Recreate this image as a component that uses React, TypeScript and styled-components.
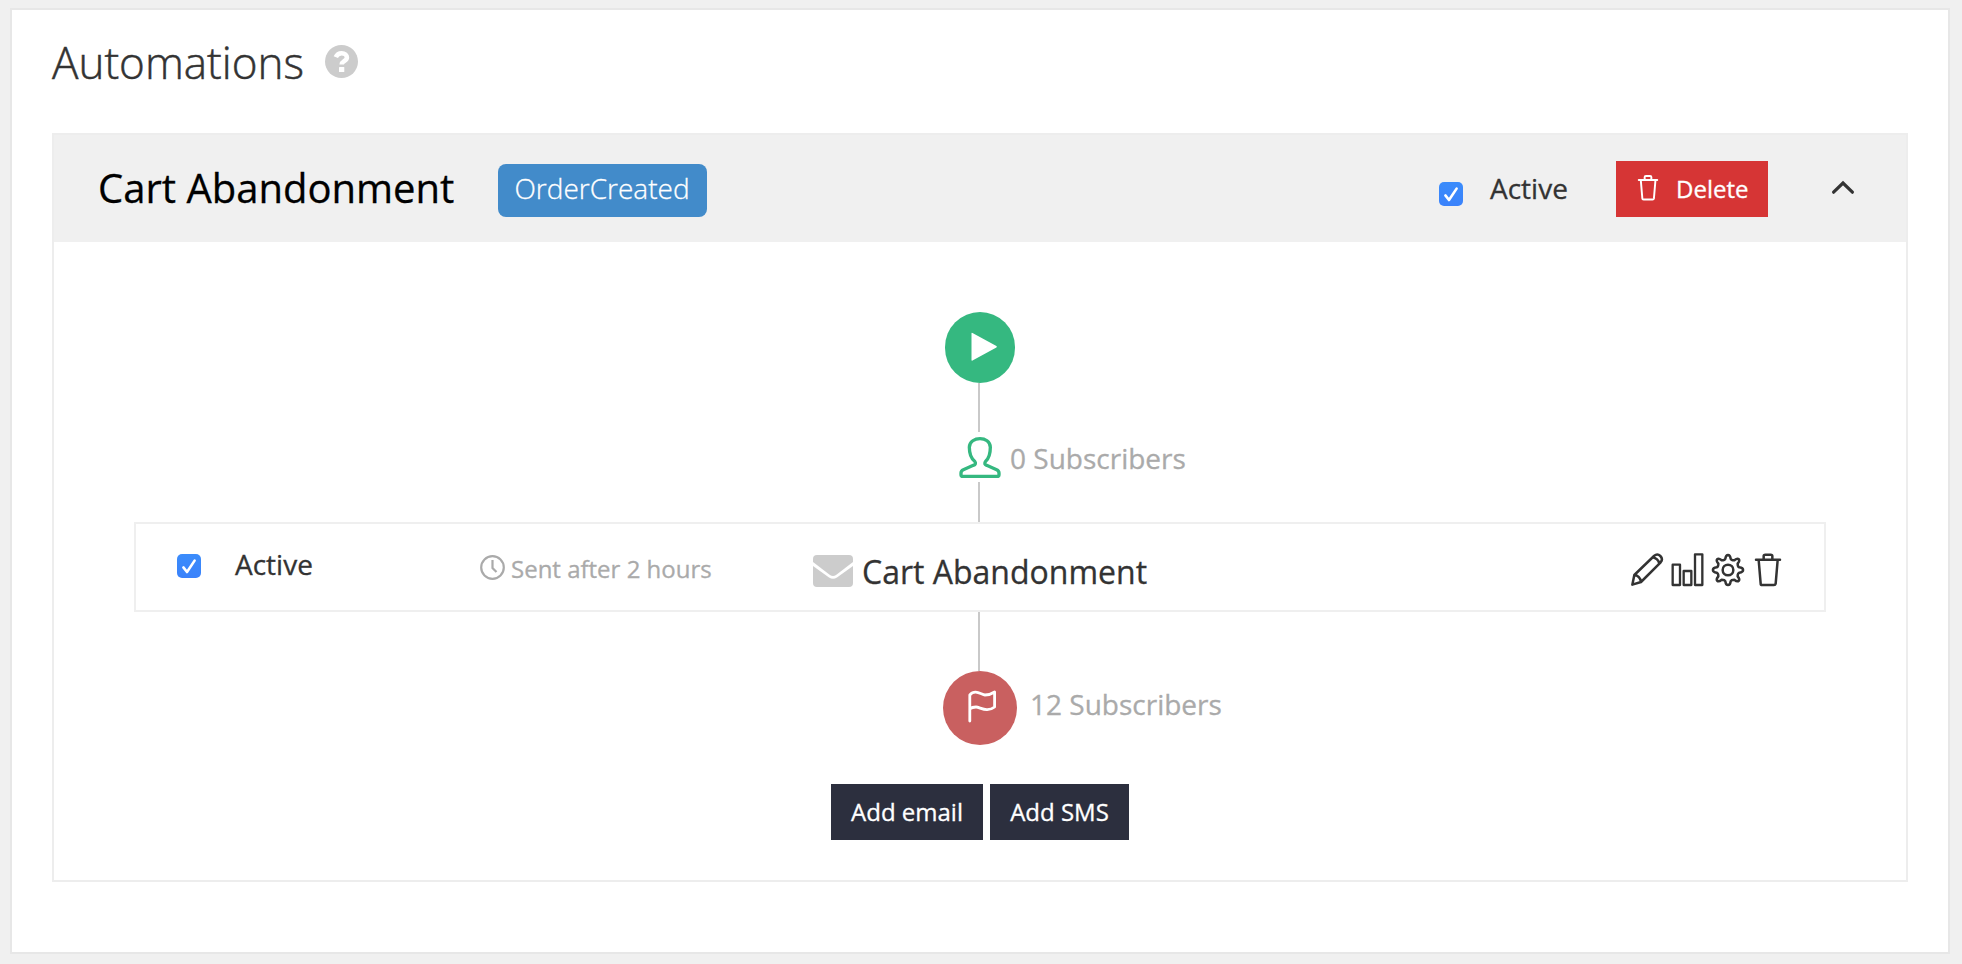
import React, { useState } from "react";
import styled, { createGlobalStyle } from "styled-components";

const GlobalStyle = createGlobalStyle`
  * { box-sizing: border-box; }
  body {
    margin: 0;
    background: #f0f0f0;
    color: #333;
    font-family: "Open Sans", "Noto Sans", sans-serif;
    -webkit-text-stroke: 0.3px currentColor;
  }
  svg { display: block; flex: none; }
`;

const Page = styled.div`
  height: 964px;
  padding: 8px 12px 10px 10px;
  overflow: hidden;
`;

const Panel = styled.main`
  height: 946px;
  padding: 0 40px;
  background: #fff;
  border: 2px solid #e7e7e7;
`;

const Heading = styled.header`
  display: flex;
  height: 123px;
`;

const PageTitle = styled.h1`
  width: 273px;
  margin: 22px 0 0;
  font-size: 44px;
  font-weight: 300;
  line-height: 60px;
  white-space: nowrap;
  -webkit-text-stroke-width: 0.5px;
`;

const HelpIcon = styled.svg`
  margin-top: 35px;
`;

const Card = styled.section`
  height: 749px;
  border: 2px solid #ededed;
`;

const CardHeader = styled.div`
  display: flex;
  align-items: flex-start;
  height: 107px;
  padding: 0 51px 0 44px;
  background: #f0f0f0;
`;

const CardTitle = styled.h2`
  width: 400px;
  margin: 25px 0 0;
  color: #000;
  font-size: 40px;
  font-weight: 400;
  line-height: 56px;
  white-space: nowrap;
`;

const Badge = styled.span`
  width: 209px;
  height: 53px;
  margin-top: 29px;
  padding-right: 1px;
  border-radius: 8px;
  background: #428bca;
  color: #fff;
  font-size: 28px;
  font-weight: 300;
  line-height: 48px;
  text-align: center;
`;

const HeaderActions = styled.div`
  display: flex;
  align-items: flex-start;
  margin-left: auto;
`;

const Check = styled.button<{ $top: number }>`
  width: 24px;
  height: 24px;
  margin: ${(p) => p.$top}px 0 0;
  padding: 0;
  border: 0;
  border-radius: 5px;
  background: linear-gradient(#3b8cfb, #3a82fb);
`;

const Label = styled.span<{ $top: number; $left: number; $width: number }>`
  width: ${(p) => p.$width}px;
  margin: ${(p) => p.$top}px 0 0 ${(p) => p.$left}px;
  font-size: 28px;
  line-height: 38px;
  white-space: nowrap;
`;

const DeleteButton = styled.button`
  display: flex;
  width: 152px;
  height: 56px;
  margin-top: 26px;
  padding: 0 0 0 21px;
  border: 0;
  background: #d63535;
  color: #fff;
  font: 500 24px/56px "Open Sans", "Noto Sans", sans-serif;
  gap: 17px;

  svg { margin-top: 13px; }
`;

const Toggle = styled.button`
  margin: 44px 0 0 62px;
  padding: 0;
  border: 0;
  background: none;
`;

const Flow = styled.div`
  display: flex;
  flex-direction: column;
  align-items: center;
  padding-top: 70px;
`;

const Node = styled.div`
  display: grid;
  grid-template-columns: 1fr auto 1fr;
  width: 100%;
`;

const Circle = styled.div<{ $size: number; $color: string }>`
  grid-column: 2;
  width: ${(p) => p.$size}px;
  height: ${(p) => p.$size}px;
  border-radius: 50%;
  background: ${(p) => p.$color};
`;

const Person = styled.svg`
  grid-column: 2;
`;

const Count = styled.span<{ $top: number; $left: number }>`
  margin: ${(p) => p.$top}px 0 0 ${(p) => p.$left}px;
  color: #aaa;
  font-size: 28px;
  line-height: 38px;
  white-space: nowrap;
`;

const Connector = styled.div<{ $length: number; $after?: number }>`
  width: 2px;
  height: ${(p) => p.$length}px;
  margin: 0 2px ${(p) => p.$after ?? 0}px 0;
  background: #c9c9c9;
`;

const Step = styled.div`
  display: flex;
  align-items: flex-start;
  width: 1692px;
  height: 90px;
  padding: 0 42px 0 41px;
  border: 2px solid #efefef;
`;

const Delay = styled.div`
  display: flex;
  width: 333px;
  margin-top: 30px;
  gap: 6px;
  color: #aaa;
  font-size: 24px;
  line-height: 30px;
  white-space: nowrap;

  svg { margin-top: 1px; }
`;

const StepName = styled.div`
  display: flex;
  gap: 9px;
  margin-top: 31px;
  font-size: 32px;
  white-space: nowrap;

  span { margin-top: -5px; line-height: 44px; }
`;

const StepActions = styled.div`
  display: flex;
  margin: 28px 0 0 auto;
  gap: 7px;

  svg:last-child { margin-left: 2px; }
`;

const Buttons = styled.div`
  display: flex;
  gap: 7px;
  margin-top: 39px;
`;

const DarkButton = styled.button<{ $width: number }>`
  width: ${(p) => p.$width}px;
  height: 56px;
  padding: 0;
  border: 0;
  background: #2c2f3e;
  color: #fff;
  font: 500 24px/56px "Open Sans", "Noto Sans", sans-serif;
  white-space: nowrap;
`;

function Checkbox({ top }: { top: number }) {
  const [checked, setChecked] = useState(true);
  return (
    <Check
      $top={top}
      role="checkbox"
      aria-checked={checked}
      aria-label="Active"
      onClick={() => setChecked(!checked)}
    >
      {checked && (
        <svg width="24" height="24" viewBox="0 0 24 24" fill="none" stroke="#fff" strokeWidth="2.6" strokeLinecap="round" strokeLinejoin="round">
          <path d="M6.4 13.4 10 18 17.6 6.6" />
        </svg>
      )}
    </Check>
  );
}

function Trash({ width, height }: { width: number; height: number }) {
  return (
    <svg width={width} height={height} viewBox="462 126 84 105" fill="none" stroke="currentColor" strokeWidth="7.5" strokeLinecap="round" strokeLinejoin="round">
      <path d="M468 149H540M476 150 482 221Q482 225 487 225H522Q526 225 527 221L533 150M491 148V138Q491 134 496 134H512Q517 134 517 138V148" />
    </svg>
  );
}

export default function App() {
  return (
    <Page>
      <GlobalStyle />
      <Panel>
        <Heading>
          <PageTitle>Automations</PageTitle>
          <HelpIcon width="33" height="33" viewBox="0 0 33 33">
            <circle cx="16.5" cy="16.5" r="16.5" fill="#ccc" />
            <path d="M10.8 12.2C12 9.4 14 8.2 16.6 8.2c3.2 0 5.3 1.8 5.3 4.3 0 3.6-5.2 3.7-5.2 6.9" fill="none" stroke="#fff" strokeWidth="4.6" />
            <rect x="14" y="22" width="5.3" height="5" rx=".6" fill="#fff" />
          </HelpIcon>
        </Heading>
        <Card>
          <CardHeader>
            <CardTitle>Cart Abandonment</CardTitle>
            <Badge>OrderCreated</Badge>
            <HeaderActions>
              <Checkbox top={47} />
              <Label $top={34} $left={27} $width={126}>Active</Label>
              <DeleteButton>
                <Trash width={22} height={27} />
                Delete
              </DeleteButton>
              <Toggle aria-label="Collapse">
                <svg width="25" height="18" viewBox="-1 0 25 18" fill="none" stroke="#333" strokeWidth="3.2" strokeLinecap="round">
                  <path d="M2.6 13.2 12 4l9.4 9.2" />
                </svg>
              </Toggle>
            </HeaderActions>
          </CardHeader>
          <Flow>
            <Node>
              <Circle $size={70.5} $color="#35b880">
                <svg width="70" height="70" viewBox="0 0 70 70">
                  <path d="M26.5 21.5Q26.5 20.4 27.5 21L51.4 34Q52.4 34.7 51.4 35.4L27.5 48.6Q26.5 49.2 26.5 48Z" fill="#fff" />
                </svg>
              </Circle>
            </Node>
            <Connector $length={49.5} $after={4} />
            <Node>
              <Person width="42" height="46" viewBox="177 438 126 138" fill="none" stroke="#35b880" strokeWidth="10" strokeLinejoin="round">
                <path d="M240 446C255 446 271 454 271 472C271 494 267 505 257 514C252 520 254 524 260 526L290 539Q297 542 297 549V554Q297 559 291 559H189Q183 559 183 554V549Q183 542 190 539L220 526C227 524 228 519 224 514C213 505 208 494 208 472C208 454 225 446 240 446Z" />
              </Person>
              <Count $top={3} $left={9}>0 Subscribers</Count>
            </Node>
            <Connector $length={40} />
            <Step>
              <Checkbox top={30} />
              <Label $top={21} $left={34} $width={245}>Active</Label>
              <Delay>
                <svg width="25" height="25" viewBox="0 0 25 25" fill="none" stroke="#aaa" strokeWidth="2.2">
                  <circle cx="12.5" cy="12.5" r="11.3" />
                  <path d="M12.5 5v8l4 4" />
                </svg>
                <span>Sent after 2 hours</span>
              </Delay>
              <StepName>
                <svg width="40" height="32" viewBox="0 0 40 32" fill="#ccc">
                  <path d="M4 0H36Q40 0 40 4V7L23 20Q20 22 17 20L0 7V4Q0 0 4 0Z" />
                  <path d="M0 11 16 22.6Q20 25 24 22.6L40 11V28Q40 32 36 32H4Q0 32 0 28Z" />
                </svg>
                <span>Cart Abandonment</span>
              </StepName>
              <StepActions>
                <svg width="34" height="35" viewBox="90 126 102 105" fill="none" stroke="#333" strokeWidth="7.5" strokeLinejoin="round">
                  <path d="M97 224 103 195 162 138Q172 129 181 138Q190 147 182 157L123 216ZM103 195Q120 197 123 216M158 142Q174 145 178 161" />
                </svg>
                <svg width="33" height="35" viewBox="213 126 99 105" fill="none" stroke="#333" strokeWidth="7" strokeLinejoin="round">
                  <path d="M218 164H240V225H218ZM251 183H274V225H251ZM285 133H307V225H285Z" />
                </svg>
                <svg width="34" height="35" viewBox="-51 -54 102 105" fill="none" stroke="#333" strokeWidth="7.5" strokeLinejoin="round">
                  <circle r="16" />
                  <path d="M-8 -34C-6 -49 6 -49 8 -34Q10 -29 19 -29C31 -39 39 -31 29 -19Q29 -10 34 -8C49 -6 49 6 34 8Q29 10 29 19C39 31 31 39 19 29Q10 29 8 34C6 49 -6 49 -8 34Q-10 29 -19 29C-31 39 -39 31 -29 19Q-29 10 -34 8C-49 6 -49 -6 -34 -8Q-29 -10 -29 -19C-39 -31 -31 -39 -19 -29Q-10 -29 -8 -34Z" />
                </svg>
                <Trash width={28} height={35} />
              </StepActions>
            </Step>
            <Connector $length={59} />
            <Node>
              <Circle $size={74} $color="#c96060">
                <svg width="74" height="74" viewBox="0 0 74 74" fill="none" stroke="#fff" strokeWidth="2.8" strokeLinecap="round" strokeLinejoin="round">
                  <path d="M26.8 50V24C32 18 38 23.5 42 24Q47 24 51.6 21V36C44 42 37 36 33 36Q29 36 26.8 38" />
                </svg>
              </Circle>
              <Count $top={14} $left={13}>12 Subscribers</Count>
            </Node>
            <Buttons>
              <DarkButton $width={152}>Add email</DarkButton>
              <DarkButton $width={139}>Add SMS</DarkButton>
            </Buttons>
          </Flow>
        </Card>
      </Panel>
    </Page>
  );
}
